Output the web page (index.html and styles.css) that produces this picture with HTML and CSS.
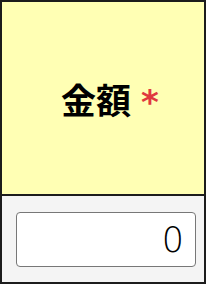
FILE: index.html
```html
<html lang="ja">
	<head>
		<meta charset="utf-8" />
		<meta name="viewport" content="width=device-width, initial-scale=1" />
		<title>金額</title>
		<link rel="stylesheet" href="styles.css">
	</head>

	<body>
		<div class="field-card">
			<div class="field-label">
				<span class="label-text">金額</span>
				<span class="required">*</span>
			</div>
			<div class="field-body">
				<input class="amount-input" type="text" value="0" />
			</div>
		</div>
	</body>
</html>
```

FILE: styles.css
```css
body {
	margin: 0;
	font-family: 'DejaVu Sans', sans-serif;
}

.field-card {
	width: 206px;
	height: 284px;
	box-sizing: border-box;
	border: 2px solid #1c1c1c;
	display: flex;
	flex-direction: column;
}

.field-label {
	height: 192px;
	background: #ffffb4;
	border-bottom: 2px solid #1c1c1c;
	display: flex;
	align-items: center;
	justify-content: center;
	gap: 10px;
	padding-left: 14px;
}

.label-text {
	font-family: 'Noto Sans CJK JP', sans-serif;
	font-weight: bold;
	font-size: 35px;
	color: #000;
	line-height: 1;
}

.required {
	font-family: 'DejaVu Sans', sans-serif;
	font-weight: bold;
	font-size: 34px;
	color: #e0393e;
	line-height: 1;
	padding-top: 8px;
}

.field-body {
	flex: 1;
	background: #f4f4f4;
	padding: 16px 8px 0 14px;
}

.amount-input {
	display: block;
	width: 180px;
	height: 55px;
	box-sizing: border-box;
	border: 1px solid #777;
	border-radius: 4px;
	background: #fff;
	text-align: right;
	padding: 0 11px 0 0;
	font-family: 'DejaVu Sans', sans-serif;
	font-weight: 200;
	font-stretch: condensed;
	font-size: 35px;
	color: #000;
	outline: none;
}
```
